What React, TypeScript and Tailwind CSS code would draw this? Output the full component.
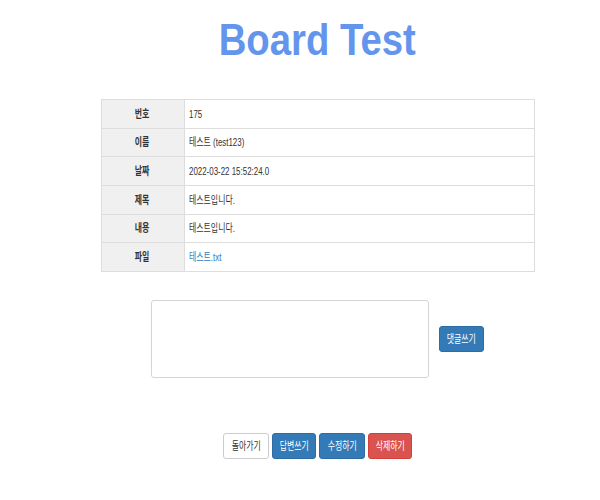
import React from 'react';

const rows: { label: string; value: string; link?: boolean }[] = [
  { label: '번호', value: '175' },
  { label: '이름', value: '테스트 (test123)' },
  { label: '날짜', value: '2022-03-22 15:52:24.0' },
  { label: '제목', value: '테스트입니다.' },
  { label: '내용', value: '테스트입니다.' },
  { label: '파일', value: '테스트.txt', link: true },
];

function Btn({ children, kind }: { children: React.ReactNode; kind: 'default' | 'primary' | 'danger' }) {
  const cls =
    kind === 'primary'
      ? 'bg-[#337ab7] border-[#2e6da4] text-white'
      : kind === 'danger'
        ? 'bg-[#d9534f] border-[#d43f3a] text-white'
        : 'bg-white border-[#ccc] text-[#333]';
  return (
    <button className={`flex h-[26px] w-full items-center justify-center rounded-[3px] border p-0 text-[11px] ${cls}`}>
      <span className="inline-block shrink-0 origin-center scale-x-[0.72] whitespace-nowrap">{children}</span>
    </button>
  );
}

export default function App() {
  return (
    <main
      className="h-[500px] w-[600px] bg-white pl-[35px] text-[#333]"
      style={{ fontFamily: '"Liberation Sans", "Noto Sans CJK KR", sans-serif' }}
    >
      <div className="flex flex-col items-center">
        <h1 className="mt-[18px] h-[43px] text-[44px] leading-[43px] font-bold text-[#6495ed]">
          <span className="inline-block origin-center scale-x-[0.87] whitespace-nowrap">Board Test</span>
        </h1>

        <table className="mt-[38px] w-[434px] border-collapse text-[11px]">
          <tbody>
            {rows.map((r) => (
              <tr key={r.label} className="h-[28.7px]">
                <td className="w-[83px] border border-[#ddd] bg-[#f0f0f0] p-0 text-center font-bold">
                  <span className="inline-block origin-center scale-x-[0.72]">{r.label}</span>
                </td>
                <td className="border border-[#ddd] p-0 pl-[4px]">
                  <span
                    className={`inline-block origin-left scale-x-[0.72] whitespace-nowrap ${
                      r.link ? 'text-[#337ab7]' : ''
                    }`}
                  >
                    {r.value}
                  </span>
                </td>
              </tr>
            ))}
          </tbody>
        </table>

        <div className="mt-[28px] flex items-center gap-[10px]">
          <textarea className="h-[78px] w-[278px] resize-none rounded-[3px] border border-[#d5d5d5] bg-white outline-none" />
          <div className="w-[45px]">
            <Btn kind="primary">댓글쓰기</Btn>
          </div>
        </div>

        <div className="mt-[55px] flex gap-[3px]">
          <div className="w-[46px]">
            <Btn kind="default">돌아가기</Btn>
          </div>
          <div className="w-[44px]">
            <Btn kind="primary">답변쓰기</Btn>
          </div>
          <div className="w-[46px]">
            <Btn kind="primary">수정하기</Btn>
          </div>
          <div className="w-[44px]">
            <Btn kind="danger">삭제하기</Btn>
          </div>
        </div>
      </div>
    </main>
  );
}
